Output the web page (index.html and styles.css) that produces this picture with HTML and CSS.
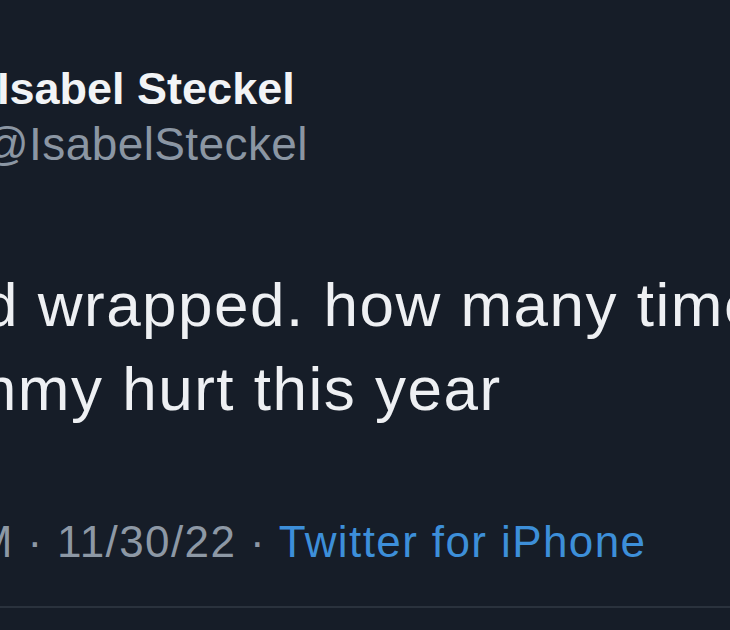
FILE: index.html
```html
<!DOCTYPE html>
<html lang="en">
<head>
<meta charset="utf-8">
<title>Tweet</title>
<link rel="stylesheet" href="styles.css">
</head>
<body>
<main class="tweet">
  <header class="author">
    <div class="name">Isabel Steckel</div>
    <div class="handle">@IsabelSteckel</div>
  </header>
  <div class="text">
    <div class="line line-1">d wrapped. how many times did my</div>
    <div class="line line-2">tummy hurt this year</div>
  </div>
  <div class="meta">
    <span class="time">PM · 11/30/22 · </span><a class="source" href="#">Twitter for iPhone</a>
  </div>
  <div class="divider"></div>
</main>
</body>
</html>
```

FILE: styles.css
```css
html, body {
  margin: 0;
  padding: 0;
}

body {
  width: 730px;
  height: 630px;
  overflow: hidden;
  background: #161d28;
  font-family: "Liberation Sans", Arial, sans-serif;
}

.tweet {
  padding-top: 63px;
  overflow: hidden;
}

.author {
  display: flex;
  flex-direction: column;
}

.name {
  font-size: 45px;
  font-weight: 700;
  line-height: 52px;
  color: #f2f4f6;
  margin-left: -3px;
  white-space: nowrap;
}

.handle {
  font-size: 46px;
  line-height: 55px;
  margin-top: 2px;
  letter-spacing: 0.4px;
  color: #8b96a3;
  margin-left: -18px;
  white-space: nowrap;
}

.text {
  margin-top: 91px;
  color: #eef0f3;
  font-size: 62px;
  line-height: 84px;
  letter-spacing: 1.5px;
}

.line {
  white-space: nowrap;
}

.line-1 {
  margin-left: -17px;
}

.line-2 {
  margin-left: -90px;
}

.meta {
  margin-top: 85px;
  margin-left: -55px;
  font-size: 44px;
  line-height: 52px;
  letter-spacing: 1.4px;
  white-space: nowrap;
  color: #8d98a5;
}

.source {
  color: #3d8fd9;
  text-decoration: none;
}

.divider {
  margin-top: 38px;
  height: 2px;
  background: #2a323d;
}
```
